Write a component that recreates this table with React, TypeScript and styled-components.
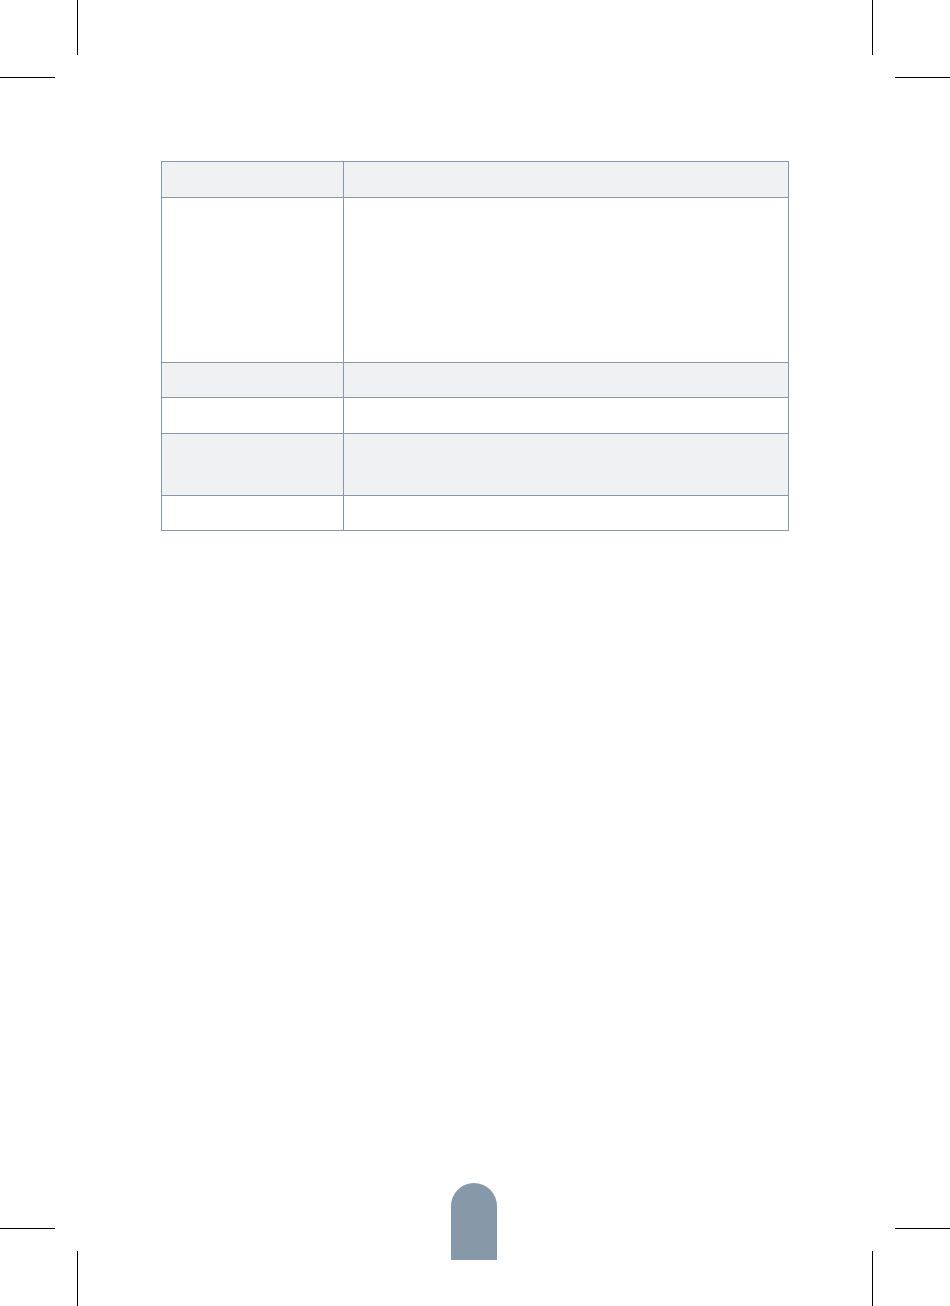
import React from "react";
import styled, { createGlobalStyle, css } from "styled-components";

const Global = createGlobalStyle`
  html, body { margin: 0; padding: 0; background: #ffffff; }
  body { font-family: "Liberation Sans", Arial, sans-serif; }
`;

const LINE = "#8898a6";

const Page = styled.div`
  width: 950px;
  height: 1306px;
  background: #ffffff;
  display: flex;
  flex-direction: column;
  overflow: hidden;
`;

const TopBand = styled.div`
  height: 78px;
  display: flex;
  justify-content: space-between;
  flex-shrink: 0;
`;

const BottomBand = styled.div`
  height: 123px;
  display: flex;
  align-items: flex-end;
  flex-shrink: 0;
`;

type Side = "tl" | "tr" | "bl" | "br";

/* Crop mark corner: a 78×78 grid holding one vertical and one horizontal hairline */
const Corner = styled.div<{ $side: Side }>`
  width: 78px;
  height: 78px;
  display: grid;
  flex-shrink: 0;
  ${(p) => {
    const left = p.$side === "tl" || p.$side === "bl";
    const top = p.$side === "tl" || p.$side === "tr";
    return css`
      grid-template-columns: ${left ? "55px 22px 1px" : "1px 22px 55px"};
      grid-template-rows: ${top ? "55px 22px 1px" : "1px 22px 55px"};
    `;
  }}
  ${(p) => p.$side === "br" && css`margin-left: auto;`}
  ${(p) => p.$side === "tr" && css`margin-left: auto;`}
`;

const VLine = styled.span<{ $side: Side }>`
  background: #000000;
  grid-column: ${(p) => (p.$side === "tl" || p.$side === "bl" ? 3 : 1)};
  grid-row: ${(p) => (p.$side === "tl" || p.$side === "tr" ? 1 : 3)};
`;

const HLine = styled.span<{ $side: Side }>`
  background: #000000;
  grid-column: ${(p) => (p.$side === "tl" || p.$side === "bl" ? 1 : 3)};
  grid-row: ${(p) => (p.$side === "tl" || p.$side === "tr" ? 3 : 1)};
`;

const CropMark = ({ side }: { side: Side }) => (
  <Corner $side={side}>
    <VLine $side={side} />
    <HLine $side={side} />
  </Corner>
);

const Main = styled.main`
  flex: 1;
  padding: 83px 0 0 161px;
`;

const Table = styled.div`
  width: 628px;
  border: 1px solid ${LINE};
  box-sizing: border-box;
  display: flex;
  flex-direction: column;
`;

const Row = styled.div<{ $h: number; $shade?: boolean }>`
  display: grid;
  grid-template-columns: 181px 1fr;
  height: ${(p) => p.$h}px;
  background: ${(p) => (p.$shade ? "#eff1f3" : "#ffffff")};
  & + & {
    border-top: 1px solid ${LINE};
  }
`;

const Cell = styled.div`
  & + & {
    border-left: 1px solid ${LINE};
  }
`;

const Tab = styled.div`
  align-self: flex-start;
  margin-left: 373px;
  width: 46px;
  height: 77px;
  background: #8799a8;
  border-radius: 23px 23px 0 0;
  flex-shrink: 0;
`;

const rows: { h: number; shade: boolean }[] = [
  { h: 35, shade: true },
  { h: 164, shade: false },
  { h: 34, shade: true },
  { h: 35, shade: false },
  { h: 61, shade: true },
  { h: 34, shade: false },
];

export default function App() {
  return (
    <>
      <Global />
      <Page>
        <TopBand>
          <CropMark side="tl" />
          <CropMark side="tr" />
        </TopBand>
        <Main>
          <Table>
            {rows.map((r, i) => (
              <Row key={i} $h={r.h} $shade={r.shade}>
                <Cell />
                <Cell />
              </Row>
            ))}
          </Table>
        </Main>
        <BottomBand>
          <CropMark side="bl" />
          <Tab />
          <CropMark side="br" />
        </BottomBand>
      </Page>
    </>
  );
}
